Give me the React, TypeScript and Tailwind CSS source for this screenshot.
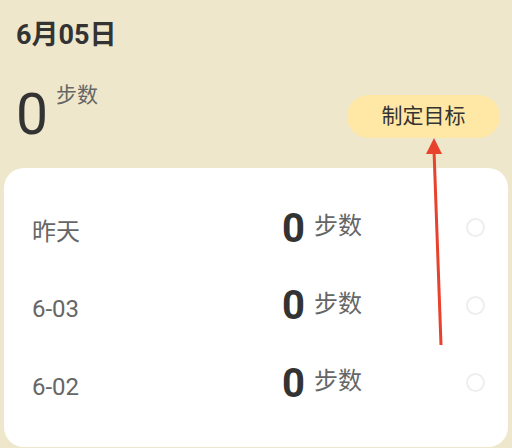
import React from "react";

const font = { fontFamily: '"Roboto", "Noto Sans CJK SC", sans-serif' };

const rows = [
  { label: "昨天" },
  { label: "6-03" },
  { label: "6-02" },
];

export default function App() {
  return (
    <div
      className="relative w-[512px] h-[448px] overflow-hidden bg-[#EFE7CB] flex flex-col"
      style={font}
    >
      <div className="pl-4 pt-[19px] text-[27px] leading-[32px] font-bold text-[#333333]">
        6月05日
      </div>
      <div className="flex items-start pl-4 pr-3 mt-[35px] h-[82px]">
        <div className="text-[57px] leading-[57px] text-[#333333]">0</div>
        <div className="ml-[8px] mt-[-6px] text-[21px] leading-[30px] text-[#666666]">步数</div>
        <button className="ml-auto mt-[9px] w-[153px] h-[43px] rounded-full bg-[#FFE8A6] text-[21px] text-[#333333] flex items-center justify-center">
          制定目标
        </button>
      </div>
      <div className="flex-1 mx-1 mb-[1px] rounded-[20px] bg-white pt-[21px] flex flex-col">
        {rows.map((r) => (
          <div key={r.label} className="h-[77.5px] flex items-center pl-7 pr-[23px]">
            <div className="w-[250px] mt-[8px] text-[24px] text-[#666666]">{r.label}</div>
            <div className="text-[40px] leading-none font-bold text-[#333333] mt-[2px]">0</div>
            <div className="ml-[9px] mt-[-3px] text-[24px] text-[#666666]">步数</div>
            <div className="ml-auto w-[19px] h-[19px] rounded-full border-2 border-[#EEEEEE]" />
          </div>
        ))}
      </div>
      <svg className="absolute left-0 top-0 pointer-events-none" width="512" height="448">
        <line x1="441" y1="345" x2="434" y2="150" stroke="#E8412C" strokeWidth="3" />
        <polygon points="434,138 426,154 442,154" fill="#E8412C" />
      </svg>
    </div>
  );
}
